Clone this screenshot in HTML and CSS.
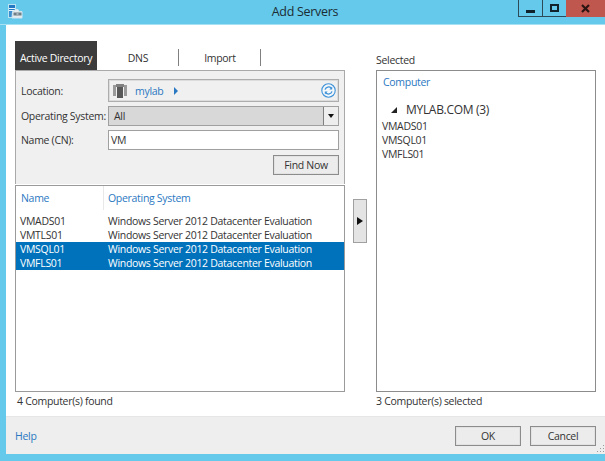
FILE: index.html
```html
<!DOCTYPE html>
<html lang="en">
<head>
    <meta charset="UTF-8">
    <meta name="viewport" content="width=device-width, initial-scale=1.0">
    <title>Add Servers</title>
    <link rel="stylesheet" href="styles.css">
</head>
<body>
    <div class="window">
        <div class="titlebar">
            <div class="app-icon">
                <svg width="15" height="15" viewBox="0 0 15 15">
                    <rect x="0.5" y="0.5" width="7" height="13" fill="#e6f3fa" stroke="#b9e2f3"/>
                    <rect x="1" y="1" width="6" height="3" fill="#2379c4"/>
                    <rect x="1" y="5" width="6" height="1" fill="#2379c4"/>
                    <rect x="1" y="7" width="4" height="6" fill="#3a8fd0"/>
                    <path d="M4.500 7.500h1.500l1-2h3l1 2h3v6.500h-10z" fill="#e4ecef" stroke="#cfe6ef"/>
                    <rect x="5.500" y="8.500" width="8" height="3" fill="#6f7f88"/>
                    <rect x="8.500" y="9.500" width="2" height="1" fill="#e4ecef"/>
                </svg>
            </div>
            <div class="window-title">Add Servers</div>
            <div class="window-buttons">
                <div class="win-btn"><span class="glyph-min"></span></div>
                <div class="win-btn"><span class="glyph-max"></span></div>
                <div class="win-btn win-close">
                    <svg width="9" height="9" viewBox="0 0 9 9"><path d="M1 1l7 7M8 1l-7 7" stroke="#2b1512" stroke-width="2.2"/></svg>
                </div>
            </div>
        </div>
        <div class="client">
            <div class="main">
                <div class="left-col">
                    <div class="tabs">
                        <div class="tab tab-active">Active Directory</div>
                        <div class="tab tab-dns">DNS</div>
                        <div class="tab tab-import">Import</div>
                    </div>
                    <div class="search-panel">
                        <div class="form-row">
                            <label>Location:</label>
                            <div class="location-box">
                                <svg class="server-icon" width="14" height="14" viewBox="0 0 14 14">
                                    <rect x="0" y="1" width="3" height="11" fill="#9a9a9a"/>
                                    <rect x="11" y="1" width="3" height="11" fill="#9a9a9a"/>
                                    <rect x="3" y="0" width="8" height="3" fill="#808080"/>
                                    <rect x="4" y="3" width="6" height="11" fill="#585858"/>
                                </svg>
                                <span class="location-name">mylab</span>
                                <span class="crumb-arrow"></span>
                                <svg class="refresh-icon" width="15" height="15" viewBox="0 0 15 15">
                                    <circle cx="7.500" cy="7.500" r="6.700" fill="#f4f8fb" stroke="#3f92d8" stroke-width="1.100"/>
                                    <path d="M4 6.600a3.700 3.700 0 0 1 6.300-1.400M11 8.400a3.700 3.700 0 0 1-6.300 1.400" fill="none" stroke="#3f92d8" stroke-width="1.300"/>
                                    <path d="M11.200 3.600v2.800H8.400zM3.800 11.400V8.600h2.800z" fill="#3f92d8"/>
                                </svg>
                            </div>
                        </div>
                        <div class="form-row">
                            <label>Operating System:</label>
                            <div class="select-box">
                                <span class="select-value">All</span>
                                <span class="select-btn"><i class="arrow-down"></i></span>
                            </div>
                        </div>
                        <div class="form-row">
                            <label>Name (CN):</label>
                            <div class="text-box">VM</div>
                        </div>
                        <div class="find-row">
                            <div class="button find-btn">Find Now</div>
                        </div>
                    </div>
                    <div class="results">
                        <div class="list-head">
                            <div class="col-name">Name</div>
                            <div class="col-os">Operating System</div>
                        </div>
                        <div class="list-row">
                            <div class="col-name">VMADS01</div>
                            <div class="col-os">Windows Server 2012 Datacenter Evaluation</div>
                        </div>
                        <div class="list-row">
                            <div class="col-name">VMTLS01</div>
                            <div class="col-os">Windows Server 2012 Datacenter Evaluation</div>
                        </div>
                        <div class="list-row selected">
                            <div class="col-name">VMSQL01</div>
                            <div class="col-os">Windows Server 2012 Datacenter Evaluation</div>
                        </div>
                        <div class="list-row selected">
                            <div class="col-name">VMFLS01</div>
                            <div class="col-os">Windows Server 2012 Datacenter Evaluation</div>
                        </div>
                    </div>
                    <div class="status status-left">4 Computer(s) found</div>
                </div>
                <div class="mid-col">
                    <div class="add-btn"><i class="arrow-right"></i></div>
                </div>
                <div class="right-col">
                    <div class="selected-label">Selected</div>
                    <div class="selected-box">
                        <div class="selected-head"><span>Computer</span></div>
                        <div class="group-row"><i class="arrow-open"></i>MYLAB.COM (3)</div>
                        <div class="sel-item">VMADS01</div>
                        <div class="sel-item">VMSQL01</div>
                        <div class="sel-item">VMFLS01</div>
                    </div>
                    <div class="status">3 Computer(s) selected</div>
                </div>
            </div>
            <div class="footer">
                <div class="help">Help</div>
                <div class="footer-buttons">
                    <div class="button dlg-btn">OK</div>
                    <div class="button dlg-btn">Cancel</div>
                </div>
                <svg class="grip" width="10" height="10" viewBox="0 0 10 10">
                    <path d="M8 1h1v1H8zM5 4h1v1H5zM8 4h1v1H8zM2 7h1v1H2zM5 7h1v1H5zM8 7h1v1H8z" fill="#9a9a9a"/>
                </svg>
            </div>
        </div>
    </div>
</body>
</html>
```
FILE: styles.css
```css
html, body {
    margin: 0;
    padding: 0;
}
body {
    background-color: #65c9ec;
    color: #333333;
    font-family: "Open Sans", "Noto Sans", sans-serif;
    font-size: 10.5px;
    letter-spacing: -0.3px;
    line-height: 14px;
}
.window {
    width: 605px;
    height: 461px;
    display: flex;
    flex-direction: column;
    overflow: hidden;
}

/* title bar */
.titlebar {
    height: 25px;
    box-sizing: border-box;
    flex: none;
    display: grid;
    grid-template-columns: 1fr auto 1fr;
    border-bottom: 1px solid #a8e0f3;
}
.app-icon {
    padding: 4px 0 0 8px;
}
.window-title {
    font-size: 12.5px;
    line-height: 24px;
    color: #1c2c33;
    margin-left: 5px;
}
.window-buttons {
    justify-self: end;
    display: flex;
    height: 17px;
}
.win-btn {
    width: 24px;
    height: 17px;
    box-sizing: border-box;
    border: 1px solid #2d4a58;
    border-top: none;
    border-right: none;
    display: flex;
    align-items: center;
    justify-content: center;
}
.win-close {
    width: 39px;
    background-color: #c0574e;
    border: none;
}
.glyph-min {
    width: 9px;
    height: 3px;
    margin-top: 6px;
    background-color: #10222b;
}
.glyph-max {
    width: 5px;
    height: 4px;
    border: 2px solid #10222b;
}

/* main area */
.client {
    flex: 1;
    margin: 0 0 7px 6px;
    background-color: #ffffff;
    display: flex;
    flex-direction: column;
}
.main {
    flex: 1;
    display: flex;
    padding: 16px 9px 0 9px;
}
.left-col {
    width: 330px;
    flex: none;
}
.mid-col {
    width: 31px;
    flex: none;
    padding-top: 158px;
}
.right-col {
    width: 220px;
    flex: none;
    padding-top: 13px;
}

/* tabs */
.tabs {
    display: flex;
    height: 29px;
}
.tab {
    text-align: center;
    line-height: 34px;
    height: 29px;
    box-sizing: border-box;
}
.tab-active {
    width: 82px;
    background-color: #3c3c3c;
    color: #ffffff;
}
.tab-dns, .tab-import {
    width: 82px;
    background-image: linear-gradient(#808080, #808080);
    background-size: 1px 17px;
    background-position: right 8px;
    background-repeat: no-repeat;
}

/* search form */
.search-panel {
    height: 114px;
    box-sizing: border-box;
    background-color: #f0f0f0;
    border: 1px solid #a9a9a9;
    border-bottom: none;
    padding: 8px 5px 0 5px;
}
.form-row {
    display: flex;
    align-items: center;
    margin-bottom: 4px;
}
.form-row label {
    width: 87px;
    flex: none;
    white-space: nowrap;
}
.location-box {
    flex: 1;
    height: 23px;
    box-sizing: border-box;
    border: 1px solid #adadad;
    box-shadow: inset 0 0 0 1px #dcdcdc;
    display: flex;
    align-items: center;
    padding: 0 2px 0 4px;
}
.server-icon {
    margin-right: 8px;
}
.location-name {
    color: #2b78c2;
}
.crumb-arrow {
    margin-left: 11px;
    border-left: 4px solid #2b78c2;
    border-top: 4px solid transparent;
    border-bottom: 4px solid transparent;
}
.refresh-icon {
    margin-left: auto;
}
.select-box {
    flex: 1;
    height: 20px;
    box-sizing: border-box;
    background-color: #d8d8d8;
    border: 1px solid #a0a0a0;
    display: flex;
    align-items: center;
}
.select-value {
    flex: 1;
    padding-left: 5px;
}
.select-btn {
    width: 14px;
    height: 18px;
    background-color: #eeeeee;
    border-left: 1px solid #808080;
    display: flex;
    align-items: center;
    justify-content: center;
}
.arrow-down {
    border-top: 4px solid #111111;
    border-left: 3px solid transparent;
    border-right: 3px solid transparent;
}
.text-box {
    flex: 1;
    height: 20px;
    box-sizing: border-box;
    background-color: #ffffff;
    border: 1px solid #a0a0a0;
    padding: 2px 2px;
}
.find-row {
    display: flex;
    justify-content: flex-end;
    margin-top: 5px;
}
.button {
    box-sizing: border-box;
    background-color: #ececec;
    border: 1px solid #8c8c8c;
    box-shadow: inset 0 0 0 1px #e2e2e2;
    text-align: center;
}
.find-btn {
    width: 66px;
    height: 20px;
    line-height: 18px;
}

/* result list */
.results {
    height: 207px;
    box-sizing: border-box;
    margin-top: 1px;
    background-color: #ffffff;
    border: 1px solid #9a9a9a;
}
.list-head {
    display: flex;
    height: 28px;
    padding-top: 5px;
    box-sizing: border-box;
    color: #2b78c2;
}
.list-row {
    display: flex;
    height: 14px;
}
.list-row.selected {
    background-color: #0072bc;
    color: #ffffff;
}
.col-name {
    width: 88px;
    flex: none;
    padding-left: 4px;
    box-sizing: border-box;
}
.list-head .col-name {
    border-right: 1px solid #e8e8e8;
    height: 24px;
    margin-top: -5px;
    padding-top: 5px;
    padding-left: 5px;
}
.list-head .col-os {
    padding-left: 4px;
}
.list-row .col-os {
    padding-left: 4px;
    white-space: nowrap;
}
.status {
    margin-top: 2px;
}
.status-left {
    padding-left: 2px;
}

/* add button */
.add-btn {
    margin-left: 8px;
    width: 14px;
    height: 44px;
    box-sizing: border-box;
    background-color: #e4e4e4;
    border: 1px solid #a0a0a0;
    display: flex;
    align-items: center;
    justify-content: center;
}
.arrow-right {
    border-left: 6px solid #111111;
    border-top: 4px solid transparent;
    border-bottom: 4px solid transparent;
}

/* selected list */
.selected-label {
    height: 16px;
    line-height: 12px;
}
.selected-box {
    height: 322px;
    box-sizing: border-box;
    border: 1px solid #8c8c8c;
    background-color: #ffffff;
}
.selected-head {
    height: 32px;
    padding: 4px 0 0 6px;
    box-sizing: border-box;
    color: #2b78c2;
}
.group-row {
    font-size: 12px;
    padding-left: 14px;
    height: 16px;
    line-height: 14px;
    display: flex;
    align-items: flex-start;
}
.arrow-open {
    width: 0;
    height: 0;
    border-bottom: 6px solid #222222;
    border-left: 6px solid transparent;
    margin: 4px 9px 0 0;
}
.sel-item {
    padding-left: 5px;
}

/* footer */
.footer {
    height: 38px;
    flex: none;
    background-color: #eeeeee;
    border-top: 1px solid #e6e6e6;
    box-sizing: border-box;
    display: flex;
    align-items: center;
    justify-content: space-between;
    padding: 0 9px;
    position: relative;
}
.help {
    color: #2b78c2;
}
.footer-buttons {
    display: flex;
    gap: 9px;
}
.dlg-btn {
    width: 66px;
    height: 20px;
    line-height: 18px;
}
.grip {
    position: absolute;
    right: 0;
    bottom: 0;
}
```
